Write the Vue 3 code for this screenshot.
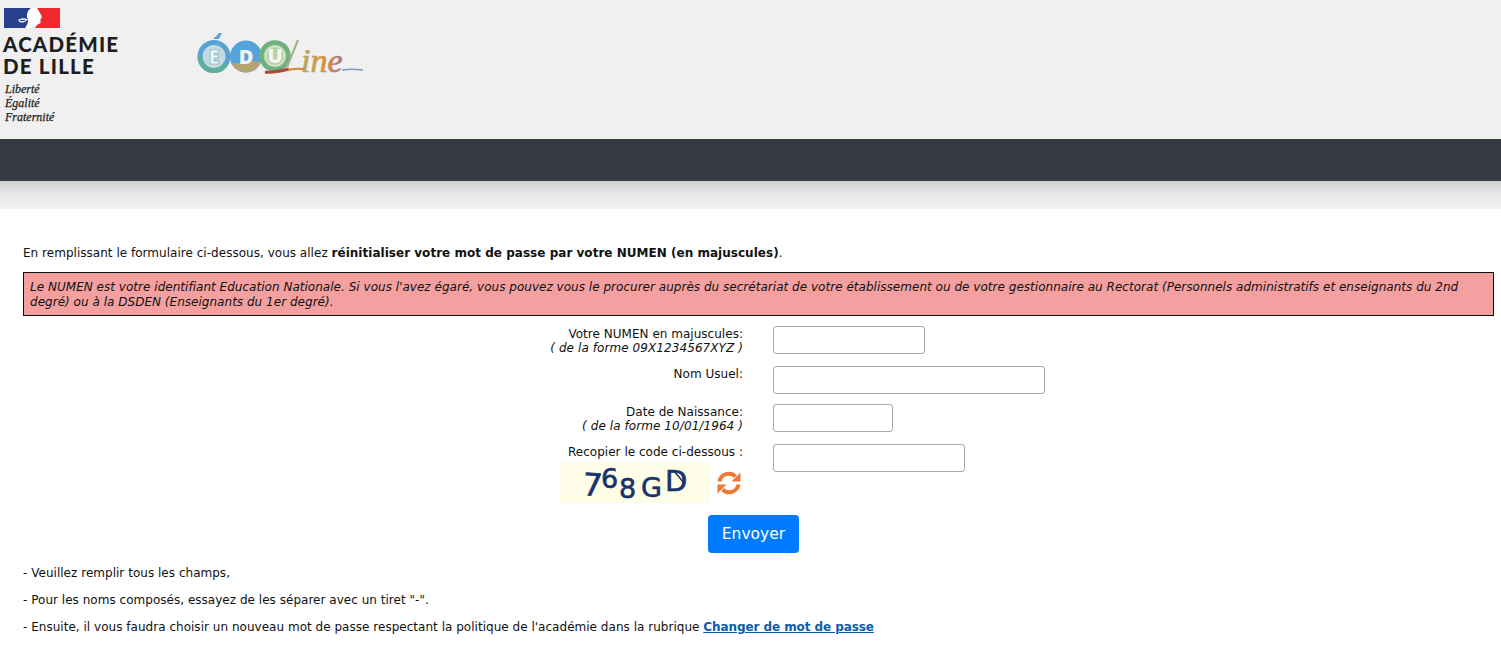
<script setup>
const rows = [
  { label: 'Votre NUMEN en majuscules:', hint: '( de la forme 09X1234567XYZ )', width: 152, size: 'tall' },
  { label: 'Nom Usuel:', width: 272, size: 'short' },
  { label: 'Date de Naissance:', hint: '( de la forme 10/01/1964 )', width: 120, size: 'tall' },
  { label: 'Recopier le code ci-dessous :', width: 192, size: 'code', captcha: true },
]
const glyphs = [
  { c: '7', x: 22, y: 33, s: 31, r: 4 },
  { c: '6', x: 41, y: 25.500, s: 27, r: 0 },
  { c: '8', x: 59, y: 35.500, s: 27, r: 0 },
  { c: 'G', x: 81, y: 35, s: 27, r: 0 },
  { c: 'D', x: 105, y: 28.500, s: 29, r: 0 },
]
</script>

<template>
  <div class="page">
    <header class="top">
      <div class="brand">
        <svg class="flag" viewBox="0 0 56 20" width="56" height="20" aria-hidden="true">
          <rect width="28" height="20" fill="#27408b" />
          <rect x="28" width="28" height="20" fill="#f0282d" />
          <path d="M27 0L33 0L36 5L38 9L36.500 11L36.500 15L33 17L31 20L21 20C24 16 25 12 23 9C22.500 5 24 2 27 0Z" fill="#fff" />
          <path d="M14 12C17 10 20 10 24 11C22 14 19 15 16 14.500Z" fill="#e8ecf4" />
          <path d="M16 12.500h5" stroke="#27408b" stroke-width="1" />
        </svg>
        <div class="academy">ACADÉMIE<br />DE LILLE</div>
        <div class="motto">Liberté<br />Égalité<br />Fraternité</div>
      </div>
      <svg class="eduline" viewBox="0 0 168 50" width="168" height="50" aria-hidden="true">
        <defs>
          <linearGradient id="ineFill" x1="0" x2="1" y1="0" y2="0">
            <stop offset="0" stop-color="#a9ab6a" />
            <stop offset=".5" stop-color="#d8963c" />
            <stop offset="1" stop-color="#b0708a" />
          </linearGradient>
        </defs>
        <path d="M17 8l6-6 3 0-3 6z" fill="#5fa6d6" />
        <circle cx="18" cy="25.500" r="14" fill="#c6d9e0" stroke="#58a3d6" stroke-width="5" />
        <path d="M4 25.500a14 14 0 0 0 14 14 14 14 0 0 0 12-7" fill="none" stroke="#5eae9b" stroke-width="5" />
        <text x="18" y="33" class="edu-letter" fill="#f4f6f4" stroke="#5aa7b0" stroke-width=".6">E</text>
        <circle cx="50" cy="25.500" r="16" fill="#54a3da" />
        <path d="M35 32c8 2 18-3 30-1-3 6-8 10.500-15 10.500-7 0-12-4-15-9.500z" fill="#b5a571" />
        <text x="50" y="33" class="edu-letter" fill="#f2f4f6">D</text>
        <circle cx="79" cy="25" r="13.500" fill="#b5d3a8" stroke="#6fb07c" stroke-width="4.500" />
        <circle cx="79" cy="25" r="9.500" fill="none" stroke="#e6efe0" stroke-width="1" />
        <text x="79" y="32" class="edu-letter" fill="#f4f6f0">U</text>
        <path d="M69 41c8 1 16-1 24-3" fill="none" stroke="#b2433f" stroke-width="3" />
        <path d="M91 36l11-27" fill="none" stroke="#9fb08a" stroke-width="2" />
        <text x="105" y="41" class="line-word" fill="url(#ineFill)" stroke="url(#ineFill)" stroke-width=".7">ine</text>
        <path d="M92 39c5-1 10-2 16-1" fill="none" stroke="#d4853c" stroke-width="2" />
        <path d="M146 39c6-1 14-1 21 0" fill="none" stroke="#7a9cc0" stroke-width="1.500" />
      </svg>
    </header>
    <nav class="bar"></nav>
    <div class="fade"></div>

    <main class="content">
      <p class="intro">
        En remplissant le formulaire ci-dessous, vous allez
        <strong>réinitialiser votre mot de passe par votre NUMEN (en majuscules)</strong>.
      </p>
      <div class="notice">
        Le NUMEN est votre identifiant Education Nationale. Si vous l'avez égaré, vous pouvez vous le procurer auprès du secrétariat de votre établissement ou de votre gestionnaire au Rectorat (Personnels administratifs et enseignants du 2nd degré) ou à la DSDEN (Enseignants du 1er degré).
      </div>

      <form class="form" @submit.prevent>
        <div v-for="row in rows" :key="row.label" class="row" :class="row.size">
          <div class="label">
            <div>{{ row.label }}</div>
            <div v-if="row.hint" class="hint">{{ row.hint }}</div>
            <div v-if="row.captcha" class="captcha-line">
              <svg class="captcha" viewBox="0 0 150 41" width="150" height="41" role="img" aria-label="Code de vérification">
                <rect width="150" height="41" fill="#fdfde8" />
                <text
                  v-for="g in glyphs"
                  :key="g.c"
                  :x="g.x"
                  :y="g.y"
                  :font-size="g.s"
                  :transform="`rotate(${g.r} ${g.x} ${g.y})`"
                  class="captcha-char"
                >{{ g.c }}</text>
                <path d="M114 9l10 12" stroke="#17336b" stroke-width="1.500" />
              </svg>
              <svg class="refresh" viewBox="0 0 24 24" width="24" height="24" aria-hidden="true">
                <path d="M2.500 10.500A9.500 9.500 0 0 1 18.500 5.500" fill="none" stroke="#ec7a34" stroke-width="4" />
                <path d="M23.500 1.500v9h-9z" fill="#ec7a34" />
                <path d="M21.500 13.500A9.500 9.500 0 0 1 5.500 18.500" fill="none" stroke="#ec7a34" stroke-width="4" />
                <path d="M.5 22.500v-9h9z" fill="#ec7a34" />
              </svg>
            </div>
          </div>
          <input class="field" type="text" :style="{ width: row.width + 'px' }" />
        </div>
        <button class="send" type="submit">Envoyer</button>
      </form>

      <p class="tip">- Veuillez remplir tous les champs,</p>
      <p class="tip">- Pour les noms composés, essayez de les séparer avec un tiret "-".</p>
      <p class="tip">- Ensuite, il vous faudra choisir un nouveau mot de passe respectant la politique de l'académie dans la rubrique <a href="#" class="link">Changer de mot de passe</a></p>
    </main>
  </div>
</template>

<style>
html, body { margin: 0; background: #fff; }
</style>

<style scoped>
.page {
  font-family: "DejaVu Sans", Verdana, sans-serif;
  font-size: 12px;
  letter-spacing: .025px;
  color: #111;
  height: 657px;
  overflow: hidden;
}
.top {
  height: 139px;
  background: #f0f0f0;
  display: flex;
  align-items: flex-start;
  box-sizing: border-box;
  padding: 8px 0 0 3px;
}
.brand { width: 193px; flex: none; color: #1e1e1e; letter-spacing: 0; }
.flag { display: block; margin-left: 1px; }
.academy {
  font-family: Lato, "Open Sans", sans-serif;
  font-weight: 900;
  font-size: 20.500px;
  line-height: 22px;
  letter-spacing: 1.2px;
  margin-top: 5px;
}
.motto {
  font-family: "Liberation Serif", serif;
  font-style: italic;
  font-size: 12px;
  line-height: 14px;
  -webkit-text-stroke: .25px #1e1e1e;
  margin: 5px 0 0 2px;
}
.eduline { margin-top: 23px; flex: none; }
.edu-letter {
  font-family: "Open Sans", sans-serif;
  font-weight: 800;
  font-size: 20px;
  text-anchor: middle;
}
.line-word {
  font-family: "Liberation Serif", serif;
  font-style: italic;
  font-size: 34px;
}
.bar { height: 42px; background: #343a40; }
.fade { height: 28px; background: linear-gradient(#cfcfcf, #e8e8e8 45%, #f1f1f1); }
.content { padding: 36px 7px 0 23px; }
.intro { margin: 0; line-height: 16px; }
.notice {
  margin-top: 11px;
  box-sizing: border-box;
  height: 44px;
  border: 1px solid #111;
  background: #f4a0a0;
  font-style: italic;
  padding: 7px 6px 0;
  line-height: 15px;
}
.form { margin-top: 10px; }
.row { display: flex; align-items: flex-start; gap: 30px; }
.tall { height: 40px; }
.short { height: 38px; }
.code { height: 71px; }
.label {
  width: 720px;
  flex: none;
  text-align: right;
  line-height: 14px;
  padding-top: 1px;
  box-sizing: border-box;
}
.hint { font-style: italic; letter-spacing: .08px; }
.captcha-line {
  display: flex;
  align-items: center;
  justify-content: flex-end;
  gap: 7px;
  margin-top: 3px;
  padding-right: 2px;
}
.captcha { display: block; flex: none; }
.captcha-char {
  font-family: "DejaVu Sans", sans-serif;
  fill: #17336b;
  stroke: #17336b;
  stroke-width: .6px;
}
.refresh { flex: none; }
.field {
  box-sizing: border-box;
  height: 28px;
  border: 1px solid #a9a9a9;
  border-radius: 3px;
  background: #fff;
  padding: 0;
}
.send {
  display: block;
  margin: 0 0 0 685px;
  width: 91px;
  height: 38px;
  border: 0;
  border-radius: 4px;
  background: #007bff;
  color: #fff;
  font-family: "DejaVu Sans", sans-serif;
  font-size: 15.500px;
}
.tip { margin: 12px 0 0; line-height: 15px; }
.form + .tip { margin-top: 13px; }
.link { color: #0b5cab; font-weight: 700; letter-spacing: -.08px; }
</style>
